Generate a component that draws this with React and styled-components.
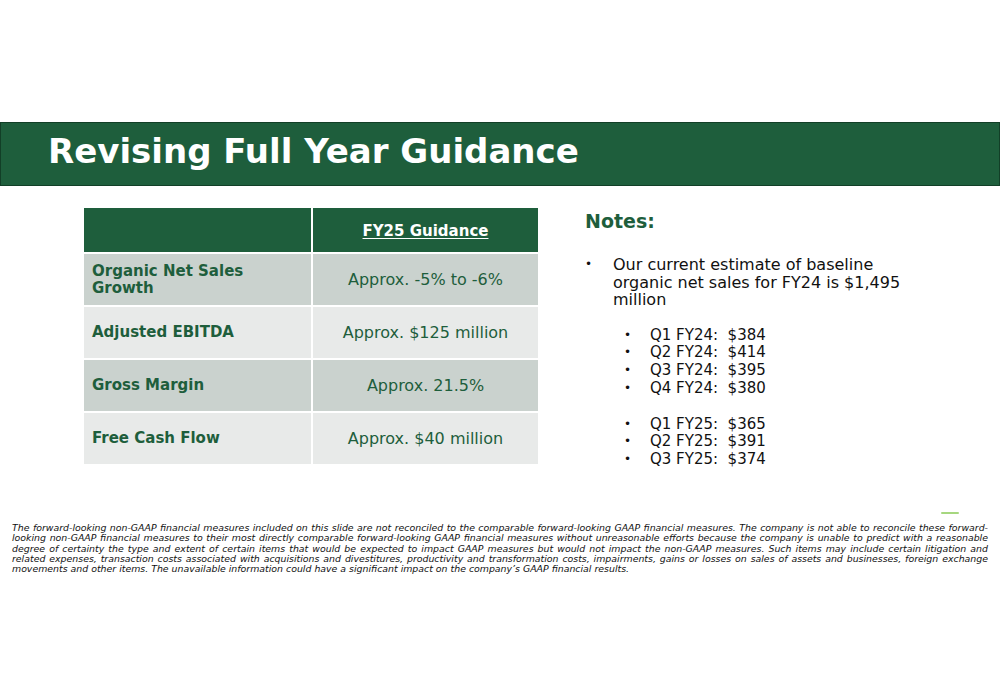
import styled, { createGlobalStyle } from 'styled-components';

const GlobalStyle = createGlobalStyle`
  html, body {
    margin: 0;
    padding: 0;
    background: #ffffff;
  }
  body {
    font-family: 'DejaVu Sans', 'Liberation Sans', sans-serif;
  }
`;

const rows = [
  { label: ['Organic Net Sales', 'Growth'], value: 'Approx. -5% to -6%', shade: 'dark' },
  { label: ['Adjusted EBITDA'], value: 'Approx. $125 million', shade: 'light' },
  { label: ['Gross Margin'], value: 'Approx. 21.5%', shade: 'dark' },
  { label: ['Free Cash Flow'], value: 'Approx. $40 million', shade: 'light' },
];

const fy24 = ['Q1 FY24:  $384', 'Q2 FY24:  $414', 'Q3 FY24:  $395', 'Q4 FY24:  $380'];
const fy25 = ['Q1 FY25:  $365', 'Q2 FY25:  $391', 'Q3 FY25:  $374'];

// slide footnote, broken where the deck breaks it
const footLines = [
  'The forward-looking non-GAAP financial measures included on this slide are not reconciled to the comparable forward-looking GAAP financial measures. The company is not able to reconcile these forward-',
  'looking non-GAAP financial measures to their most directly comparable forward-looking GAAP financial measures without unreasonable efforts because the company is unable to predict with a reasonable',
  'degree of certainty the type and extent of certain items that would be expected to impact GAAP measures but would not impact the non-GAAP measures. Such items may include certain litigation and',
  'related expenses, transaction costs associated with acquisitions and divestitures, productivity and transformation costs, impairments, gains or losses on sales of assets and businesses, foreign exchange',
  'movements and other items. The unavailable information could have a significant impact on the company’s GAAP financial results.',
];

export default function App() {
  return (
    <Slide>
      <GlobalStyle />
      <TitleBar>
        <h1>Revising Full Year Guidance</h1>
      </TitleBar>

      <Body>
        <Table>
          <HeadCell />
          <HeadCell><u>FY25 Guidance</u></HeadCell>
          {rows.map((r) => (
            <Row key={r.value}>
              <LabelCell shade={r.shade}>
                {r.label.map((l) => <span key={l}>{l}</span>)}
              </LabelCell>
              <ValueCell shade={r.shade}>{r.value}</ValueCell>
            </Row>
          ))}
        </Table>

        <Notes>
          <h2>Notes:</h2>
          <MainBullet>
            Our current estimate of baseline organic net sales for FY24 is $1,495 million
          </MainBullet>
          <SubList>
            {fy24.map((q) => <SubBullet key={q}>{q}</SubBullet>)}
          </SubList>
          <SubList>
            {fy25.map((q) => <SubBullet key={q}>{q}</SubBullet>)}
          </SubList>
        </Notes>
      </Body>

      <FootWrap>
        <Accent />
        <Footnote>
          {footLines.map((l, i) => (
            <FootLine key={i} last={i === footLines.length - 1}>{l}</FootLine>
          ))}
        </Footnote>
      </FootWrap>
    </Slide>
  );
}

const Slide = styled.div`
  width: 1000px;
  height: 685px;
  background: #ffffff;
  padding-top: 122px;
  box-sizing: border-box;
  overflow: hidden;
`;

const TitleBar = styled.div`
  height: 64px;
  box-sizing: border-box;
  background: #1e5e3c;
  border: 1px solid #123f27;
  display: flex;
  align-items: center;
  padding-left: 47px;
  padding-bottom: 6px;

  h1 {
    margin: 0;
    font-weight: 700;
    font-size: 34px;
    color: #ffffff;
  }
`;

const Body = styled.div`
  display: flex;
  align-items: flex-start;
  padding: 22px 0 0 84px;
  gap: 47px;
  height: 300px;
`;

const Table = styled.div`
  width: 454px;
  display: grid;
  grid-template-columns: 227px 225px;
  column-gap: 2px;
  row-gap: 2px;
`;

const Row = styled.div`
  display: contents;
`;

const HeadCell = styled.div`
  height: 43px;
  background: #1e5e3c;
  display: flex;
  align-items: center;
  justify-content: center;
  color: #ffffff;
  font-weight: 700;
  font-size: 15px;
  padding-top: 1px;

  u {
    text-underline-offset: 2px;
    text-decoration-thickness: 1px;
  }
`;

const shadeColor = (s) => (s === 'dark' ? '#cad2ce' : '#e8eae9');

const LabelCell = styled.div`
  height: 51px;
  background: ${(p) => shadeColor(p.shade)};
  display: flex;
  flex-direction: column;
  justify-content: center;
  padding-left: 8px;
  color: #1e5e3c;
  font-weight: 700;
  font-size: 15px;
  line-height: 17px;
`;

const ValueCell = styled.div`
  height: 51px;
  background: ${(p) => shadeColor(p.shade)};
  display: flex;
  align-items: center;
  justify-content: center;
  color: #1e5e3c;
  font-size: 16px;
`;

const Notes = styled.div`
  width: 330px;
  color: #111111;

  h2 {
    margin: 2px 0 24px 0;
    font-weight: 700;
    font-size: 19px;
    color: #1e5e3c;
  }
`;

const MainBullet = styled.div`
  position: relative;
  padding-left: 28px;
  font-size: 16px;
  line-height: 17.6px;
  margin-bottom: 18px;

  &::before {
    content: '•';
    position: absolute;
    left: 0;
    font-size: 12px;
  }
`;

const SubList = styled.div`
  padding-left: 39px;
  margin-bottom: 18px;
`;

const SubBullet = styled.div`
  position: relative;
  padding-left: 26px;
  font-size: 15px;
  line-height: 17.7px;
  white-space: pre;

  &::before {
    content: '•';
    position: absolute;
    left: 0;
    font-size: 12px;
  }
`;

const FootWrap = styled.div`
  position: relative;
  padding: 15px 12px 0 12px;
`;

const Accent = styled.div`
  position: absolute;
  top: 4px;
  left: 941px;
  width: 18px;
  height: 2px;
  border-radius: 1px;
  background: #a6d77f;
`;

const Footnote = styled.div`
  font-style: italic;
  font-size: 9.4px;
  line-height: 10.3px;
  color: #111111;
`;

const FootLine = styled.div`
  white-space: nowrap;
  text-align: ${(p) => (p.last ? 'left' : 'justify')};
  text-align-last: ${(p) => (p.last ? 'left' : 'justify')};
`;
